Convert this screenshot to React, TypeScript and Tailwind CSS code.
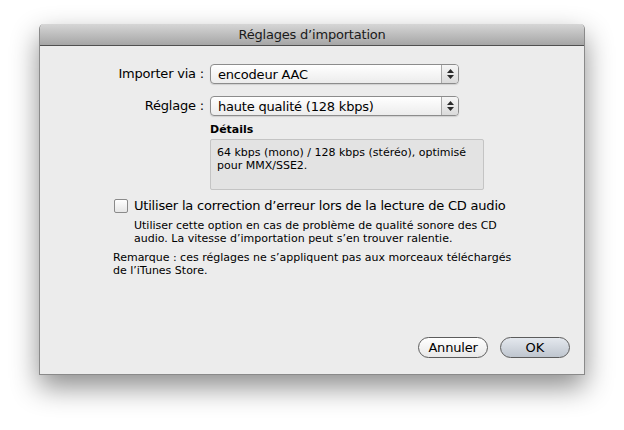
import React from 'react';

const font = { fontFamily: '"Lucida Grande", "DejaVu Sans", sans-serif' };

const Popup = ({ value }: { value: string }) => (
  <div className="flex h-[20px] w-[249px] items-stretch overflow-hidden rounded-[4px] border border-[#8c8c8c] bg-gradient-to-b from-white to-[#ececec] shadow-[0_1px_1px_rgba(0,0,0,0.12)]">
    <div className="flex flex-1 items-center pl-[7px] text-[13px] leading-none tracking-[-0.2px] text-black">{value}</div>
    <div className="flex w-[17px] flex-col items-center justify-center gap-[2px] border-l border-[#a8a8a8] bg-gradient-to-b from-[#f6f6f6] to-[#dadada]">
      <svg width="7" height="4" viewBox="0 0 7 4"><path d="M3.5 0L7 4H0z" fill="#2a2a2a" /></svg>
      <svg width="7" height="4" viewBox="0 0 7 4"><path d="M0 0h7L3.5 4z" fill="#2a2a2a" /></svg>
    </div>
  </div>
);

export default function App() {
  return (
    <div className="h-[430px] w-[624px] overflow-hidden bg-white pl-[39px] pt-[24px]" style={font}>
      <div className="flex h-[351px] w-[546px] flex-col rounded-t-[5px] border-x border-b border-[#8a8a8a] bg-[#ececec] shadow-[0_12px_28px_rgba(0,0,0,0.45)]">
        {/* Title bar */}
        <div className="flex h-[22px] items-center justify-center rounded-t-[5px] border-b border-[#505050] bg-gradient-to-b from-[#d6d6d6] to-[#a6a6a6] text-[13px] tracking-[-0.2px] text-[#1a1a1a]">
          Réglages d’importation
        </div>

        <div className="flex flex-1 flex-col">
          <div className="mt-[18px] grid grid-cols-[164px_249px] items-center gap-x-[6px] gap-y-[12px]">
            <div className="text-right text-[13px] tracking-[-0.2px] text-black">Importer via :</div>
            <Popup value="encodeur AAC" />
            <div className="text-right text-[13px] tracking-[-0.2px] text-black">Réglage :</div>
            <Popup value="haute qualité (128 kbps)" />
          </div>

          <div className="ml-[170px] mt-[6px]">
            <div className="text-[11px] font-bold leading-[16px] text-black">Détails</div>
            <div className="mt-[1px] h-[51px] w-[274px] rounded-[2px] border border-[#c4c4c4] bg-[#e3e3e3] px-[6px] pt-[6px] text-[11px] leading-[13px] text-black">
              64 kbps (mono) / 128 kbps (stéréo), optimisé pour MMX/SSE2.
            </div>
          </div>

          <div className="ml-[74px] mt-[8px] flex items-center gap-[6px]">
            <div className="h-[14px] w-[14px] rounded-[2px] border border-[#8a8a8a] bg-gradient-to-b from-white to-[#e6e6e6]" />
            <div className="text-[13px] leading-[16px] tracking-[-0.2px] text-black">Utiliser la correction d’erreur lors de la lecture de CD audio</div>
          </div>
          <div className="ml-[94px] mt-[5px] w-[380px] text-[11px] leading-[13px] text-black">
            Utiliser cette option en cas de problème de qualité sonore des CD audio. La vitesse d’importation peut s’en trouver ralentie.
          </div>
          <div className="ml-[73px] mt-[6px] w-[400px] text-[11px] leading-[13px] text-black">
            Remarque : ces réglages ne s’appliquent pas aux morceaux téléchargés de l’iTunes Store.
          </div>

          <div className="mt-auto mb-[16px] mr-[14px] flex justify-end gap-[12px]">
            <button className="h-[21px] w-[70px] rounded-full border border-[#5c5c5c] bg-gradient-to-b from-white to-[#e8e8e8] text-[13px] leading-none tracking-[-0.2px] text-black">
              Annuler
            </button>
            <button className="h-[21px] w-[70px] rounded-full border border-[#5c5c5c] bg-gradient-to-b from-[#e4e8ee] to-[#bfc6cf] text-[13px] leading-none text-black">
              OK
            </button>
          </div>
        </div>
      </div>
    </div>
  );
}
